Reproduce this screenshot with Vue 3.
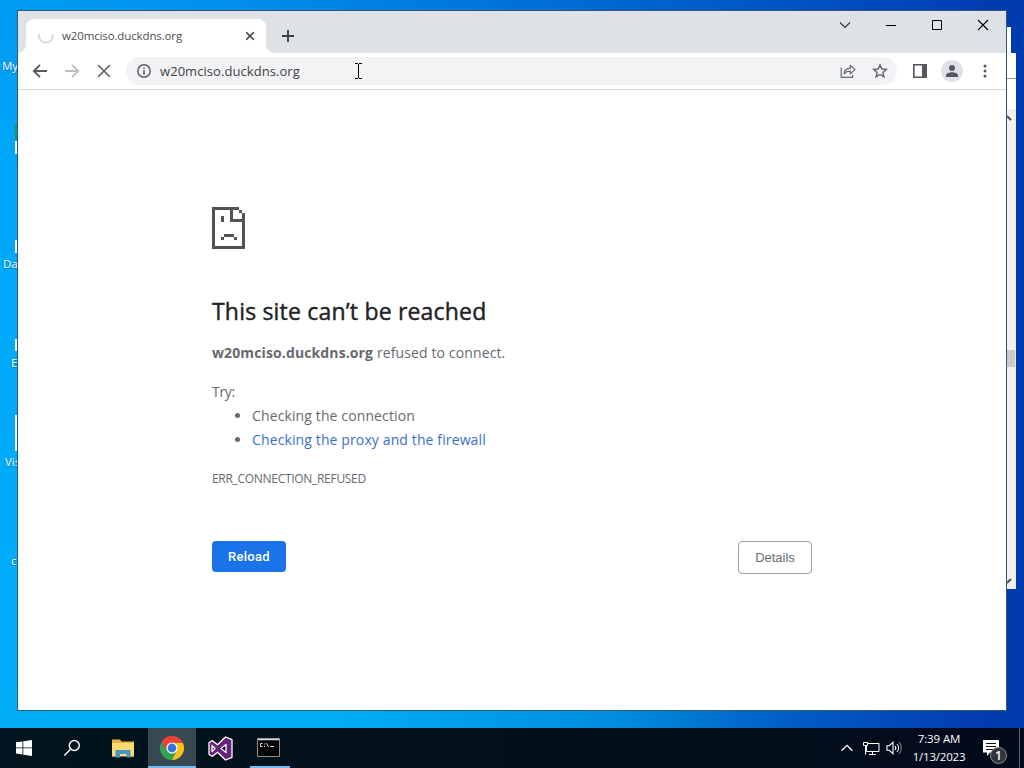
<template>
    <div class="desktop">
        <span v-for="item in shortcuts" :key="item.label" class="shortcut" :style="{ left: item.x + 'px', top: item.y + 'px' }">{{ item.label }}</span>
        <i v-for="edge in iconEdges" :key="edge.y" class="icon-edge" :style="{ top: edge.y + 'px', height: edge.h + 'px' }"></i>
        <i class="green-edge"></i>

        <div class="back-tab"></div>
        <div class="back-window">
            <div class="back-toolbar"></div>
            <div class="scrollbar">
                <svg width="9" height="12" viewBox="0 0 9 12"><path d="M0 3l4 4" stroke="#555" stroke-width="2" fill="none"/></svg>
                <div class="thumb"></div>
                <svg width="9" height="12" viewBox="0 0 9 12"><path d="M0 9l4-4" stroke="#555" stroke-width="2" fill="none"/></svg>
            </div>
        </div>

        <main class="browser">
            <header class="tabstrip">
                <div class="tab">
                    <svg class="spinner" width="18" height="18" viewBox="0 0 18 18"><path d="M2.2 6.5A7 7 0 1 0 15.8 7.5" fill="none" stroke="#d9dbdd" stroke-width="2"/></svg>
                    <span class="tab-title">w20mciso.duckdns.org</span>
                    <svg width="10" height="10" viewBox="0 0 10 10"><path d="M1.2 1.2l7.6 7.6M8.8 1.2L1.2 8.8" stroke="#3c4043" stroke-width="1.6"/></svg>
                </div>
                <svg class="new-tab" width="14" height="14" viewBox="0 0 14 14"><path d="M7 1v12M1 7h12" stroke="#3c4043" stroke-width="1.9"/></svg>
                <div class="window-controls">
                    <svg width="46" height="30" viewBox="0 0 46 30"><path d="M18 12.5l5 5 5-5" fill="none" stroke="#333" stroke-width="1.1"/></svg>
                    <svg width="46" height="30" viewBox="0 0 46 30"><path d="M18 15.5h10" stroke="#000"/></svg>
                    <svg width="46" height="30" viewBox="0 0 46 30"><path d="M18.5 10.5h9v9h-9z" fill="none" stroke="#000"/></svg>
                    <svg width="46" height="30" viewBox="0 0 46 30"><path d="M18 10l10 10M28 10L18 20" stroke="#000" stroke-width="1.1"/></svg>
                </div>
            </header>

            <nav class="toolbar">
                <svg class="nav-icon" width="16" height="16" viewBox="0 0 16 16"><path d="M15 8H2M8 1.8L1.8 8 8 14.2" fill="none" stroke="#54575b" stroke-width="1.8"/></svg>
                <svg class="nav-icon" width="16" height="16" viewBox="0 0 16 16"><path d="M1 8h13M8 1.8L14.2 8 8 14.2" fill="none" stroke="#bcbec1" stroke-width="1.8"/></svg>
                <svg class="nav-icon" width="16" height="16" viewBox="0 0 16 16"><path d="M2.2 2.2l11.6 11.6M13.8 2.2L2.2 13.8" stroke="#5a5d61" stroke-width="1.6"/></svg>
                <div class="omnibox">
                    <svg width="14" height="14" viewBox="0 0 14 14"><circle cx="7" cy="7" r="6.2" fill="none" stroke="#5f6368" stroke-width="1.5"/><path d="M7 6v4.5M7 3.4v1.6" stroke="#5f6368" stroke-width="1.6"/></svg>
                    <span class="url">w20mciso.duckdns.org</span>
                    <svg class="share" width="16" height="16" viewBox="0 0 16 16" fill="none" stroke="#6a6e72" stroke-width="1.2"><path d="M1.2 4.500v9.900h11.400V12"/><path d="M4 10.800c.5-3.600 2.500-5.400 6.300-5.600V2.300L15 6.600l-4.700 4.200V8.200C7.500 8.200 5.500 9 4 10.800z" stroke-linejoin="round"/></svg>
                    <svg width="16" height="16" viewBox="0 0 16 16"><path d="M8 1.900l1.800 4.100 4.500.4-3.400 3 1 4.400L8 11.500l-3.900 2.300 1-4.400-3.400-3 4.500-.4z" fill="none" stroke="#5f6368" stroke-width="1.4"/></svg>
                </div>
                <svg class="panel" width="14" height="14" viewBox="0 0 14 14"><path d="M.8.8h12.400v12.400H.8z" fill="none" stroke="#54575b" stroke-width="1.6"/><path d="M9 1h5v12H9z" fill="#54575b"/></svg>
                <svg class="avatar" width="22" height="22" viewBox="0 0 22 22"><circle cx="11" cy="11" r="11" fill="#dfe1e8"/><circle cx="11" cy="8" r="3" fill="#54575f"/><path d="M5 17v-1.500c0-2 3.500-3.200 6-3.200s6 1.200 6 3.200V17z" fill="#54575f"/></svg>
                <svg width="4" height="14" viewBox="0 0 4 14" fill="#54575b"><circle cx="2" cy="2" r="1.500"/><circle cx="2" cy="7" r="1.500"/><circle cx="2" cy="12" r="1.500"/></svg>
            </nav>

            <section class="page">
                <svg class="sad" width="33" height="42" viewBox="0 0 33 42" fill="#535353" shape-rendering="crispEdges">
                    <path d="M0 0h27v3H21v9h12v30H0zM3 3v36h27V15H18V3z" fill-rule="evenodd"/>
                    <path d="M27 3h3v3h-3zM30 6h3v9h-3zM9 9h3v6H9zM12 27h10v3H12zM9 30h3v3H9zM22 30h3v3h-3z"/>
                </svg>
                <h1>This site can’t be reached</h1>
                <p class="reason"><strong>w20mciso.duckdns.org</strong> <span>refused to connect.</span></p>
                <p class="try">Try:</p>
                <ul>
                    <li class="check">Checking the connection</li>
                    <li class="proxy"><a>Checking the proxy and the firewall</a></li>
                </ul>
                <p class="code">ERR_CONNECTION_REFUSED</p>
                <div class="buttons">
                    <button class="reload">Reload</button>
                    <button class="details">Details</button>
                </div>
            </section>
        </main>

        <svg class="cursor" width="9" height="17" viewBox="0 0 9 17" shape-rendering="crispEdges"><path d="M1 1.5h3M5 1.5h3M4.500 2v14M1 16.500h3M5 16.500h3" stroke="#000" fill="none"/></svg>

        <footer class="taskbar">
            <div class="task start">
                <svg width="16" height="16" viewBox="0 0 16 16" fill="#fff"><path d="M0 2.300l6.500-.9v6.100H0zM7.300 1.300L16 0v7.500H7.300zM0 8.300h6.500v6.200L0 13.600zM7.300 8.300H16V16l-8.700-1.300z"/></svg>
            </div>
            <div class="task">
                <svg width="18" height="18" viewBox="0 0 18 18" fill="none" stroke="#fff" stroke-width="1.400"><circle cx="11.300" cy="6.500" r="5"/><path d="M7.600 10.200L1.300 16.500"/></svg>
            </div>
            <div class="task files">
                <svg width="22" height="19" viewBox="0 0 22 19"><path d="M0 .5h8l1.500 2H22V17H0z" fill="#e9b33f"/><path d="M0 4h22v13.500H0z" fill="#fcdc72"/><path d="M3.500 18.500V11h15v7.500h-4V15H8v3.500z" fill="#4594c6"/><path d="M0 17h3.500M18.500 17H22" stroke="#eebd4a"/></svg>
            </div>
            <div class="task active">
                <svg width="24" height="24" viewBox="0 0 24 24"><path d="M12 6.500h10.700A12 12 0 0 1 12 24l-1-5z" fill="#fbc116"/><path d="M1.600 6L7.300 15l4.700 2.500L16.800 15 12 24A12 12 0 0 1 1.600 6z" fill="#34a353"/><path d="M1.600 6A12 12 0 0 1 22.700 6.500H12L7 15z" fill="#e94335"/><circle cx="12" cy="12" r="5.600" fill="#fff"/><circle cx="12" cy="12" r="4.400" fill="#3474e0"/></svg>
            </div>
            <div class="task">
                <svg width="25" height="25" viewBox="0 0 25 25"><path d="M17.500 1l6.500 2.700v17.600L17.500 24l-8-7.700-5 4L1 18.500v-12l3.500-1.800 5 4zM18 8.500l-5 4 5 4zM4 9.500v6l3-3z" fill="#68217a" stroke="#fff" stroke-width="1.300" fill-rule="evenodd" stroke-linejoin="round"/></svg>
            </div>
            <div class="task console">
                <svg width="23" height="19" viewBox="0 0 23 19"><path d="M.5.500h22v18H.5z" fill="#050505" stroke="#8b9094"/><path d="M1 1.500h21" stroke="#d7dadd" stroke-width="1.500"/><path d="M5.500 5.500H3.500v3h2M7.500 5.500v1M7.500 8v1M9.500 5l2 4M13 8.500h4" fill="none" stroke="#ddd"/></svg>
            </div>
            <div class="tray">
                <svg width="12" height="8" viewBox="0 0 12 8"><path d="M.6 6.800L6 1.400l5.400 5.400" fill="none" stroke="#fff" stroke-width="1.300"/></svg>
                <svg width="17" height="15" viewBox="0 0 17 15" fill="none" stroke="#fff"><path d="M5 2.500h11v8H3.500V5M9.500 10.500v3M6 13.500h7M.5 1.500h4v3h-4zM2.500 5v8.500"/></svg>
                <svg width="17" height="14" viewBox="0 0 17 14" fill="none" stroke="#fff" stroke-width="1.100"><path d="M1 4.700h2.300L7 1.300v11.400L3.300 9.300H1zM9 5a3 3 0 0 1 0 4M11 3a6 6 0 0 1 0 8"/><path d="M13.200 1.200a9 9 0 0 1 0 11.600" stroke="#777e88"/></svg>
            </div>
            <div class="clock"><span>7:39 AM</span><span class="date">1/13/2023</span></div>
            <div class="notice">
                <svg width="16" height="17" viewBox="0 0 16 17"><path d="M0 0h16v12.500H7L4 16v-3.500H0z" fill="#fff"/><path d="M3 3.500h10M3 6.500h10M3 9.500h7" stroke="#08101c"/></svg>
                <b>1</b>
            </div>
            <i class="show-desktop"></i>
        </footer>
    </div>
</template>

<script setup>
    const shortcuts = [
        { label: 'My', x: 2, y: 58 },
        { label: 'Da', x: 3, y: 256 },
        { label: 'E', x: 11, y: 355 },
        { label: 'Vis', x: 5, y: 454 },
        { label: 'c', x: 11, y: 553 },
    ]

    const iconEdges = [
        { y: 141, h: 13 },
        { y: 240, h: 13 },
        { y: 339, h: 12 },
        { y: 415, h: 36 },
    ]
</script>

<style>
    body {
        margin: 0;
        overflow: hidden;
    }
</style>

<style scoped>
    .desktop {
        position: relative;
        width: 1024px;
        height: 768px;
        overflow: hidden;
        box-sizing: border-box;
        padding: 10px 17px 0;
        display: flex;
        flex-direction: column;
        font-family: "Open Sans", "Noto Sans", sans-serif;
        background:
            linear-gradient(90deg, transparent 970px, #003bb0 1010px),
            linear-gradient(90deg, #009df3 0, #0090ea 230px, #0074d8 500px, #0052c2 800px, #003bb0 1010px) 0 0 / 100% 300px no-repeat,
            linear-gradient(90deg, #00adf6 0, #00aff4 330px, #008cde 620px, #0060c6 780px, #043bb0 980px);
    }

    .desktop::before {
        content: "";
        position: absolute;
        left: 0;
        top: 0;
        width: 17px;
        height: 728px;
        background: linear-gradient(#0099f0, #00a6fa 150px, #00aff8);
    }

    .shortcut {
        position: absolute;
        font-size: 11.5px;
        line-height: 16px;
        color: #fff;
        text-shadow: 0 1px 1px rgba(0, 40, 90, 0.4);
    }

    .icon-edge {
        position: absolute;
        left: 15px;
        width: 2px;
        background: #e8f5fc;
    }

    .green-edge {
        position: absolute;
        left: 14px;
        top: 124px;
        width: 3px;
        height: 16px;
        background: linear-gradient(90deg, #049fc9, #18976f);
    }

    .back-tab {
        position: absolute;
        left: 1000px;
        top: 27px;
        width: 11px;
        height: 26px;
        background: #fff;
    }

    .back-window {
        position: absolute;
        left: 1000px;
        top: 53px;
        width: 16px;
        height: 536px;
        background: #fff;
        display: flex;
        flex-direction: column;
    }

    .back-toolbar {
        height: 25px;
        border-bottom: 1px solid #8f9699;
        margin-bottom: 30px;
    }

    .scrollbar {
        flex: 1;
        background: #f0f0f0;
        padding: 4px 0 3px 7px;
        display: flex;
        flex-direction: column;
    }

    .thumb {
        width: 8px;
        height: 17px;
        margin: 225px 0 auto;
        background: #c9c9c9;
    }

    .browser {
        position: relative;
        box-sizing: border-box;
        width: 990px;
        height: 701px;
        border: 1px solid #34566f;
        background: #fff;
        display: flex;
        flex-direction: column;
    }

    .tabstrip {
        height: 42px;
        background: #dee1e6;
        display: flex;
        align-items: flex-end;
        flex: none;
    }

    .tab {
        position: relative;
        box-sizing: border-box;
        width: 240px;
        height: 34px;
        margin-left: 8px;
        padding: 0 11px;
        border-radius: 8px 8px 0 0;
        background: #fff;
        display: flex;
        align-items: center;
    }

    .tab::before,
    .tab::after {
        content: "";
        position: absolute;
        bottom: 0;
        width: 8px;
        height: 8px;
    }

    .tab::before {
        left: -8px;
        background: radial-gradient(circle at 0 0, transparent 7.5px, #fff 8px);
    }

    .tab::after {
        right: -8px;
        background: radial-gradient(circle at 100% 0, transparent 7.5px, #fff 8px);
    }

    .tab-title {
        flex: 1;
        margin-left: 7px;
        padding-bottom: 2px;
        font-size: 11.5px;
        letter-spacing: -0.13px;
        color: #4b4f53;
    }

    .new-tab {
        margin: 0 0 10px 15px;
    }

    .window-controls {
        margin-left: auto;
        align-self: flex-start;
        display: flex;
        margin-top: -1px;
    }

    .toolbar {
        box-sizing: border-box;
        height: 37px;
        padding: 0 19px 0 14px;
        border-bottom: 1px solid #d5d6d8;
        display: flex;
        align-items: center;
        flex: none;
    }

    .nav-icon {
        margin-right: 16px;
    }

    .omnibox {
        box-sizing: border-box;
        width: 771px;
        height: 28px;
        margin-left: -2px;
        padding: 0 9px 0 11px;
        border-radius: 14px;
        background: #f1f3f4;
        display: flex;
        align-items: center;
    }

    .url {
        margin-left: 9px;
        font-size: 13px;
        letter-spacing: 0.06px;
        color: #3f4246;
    }

    .share {
        margin-left: auto;
        margin-right: 16px;
    }

    .panel {
        margin-left: 16px;
    }

    .avatar {
        margin: 0 20px 0 14px;
    }

    .page {
        width: 600px;
        margin-left: 194px;
        padding-top: 117px;
        font-size: 14px;
        line-height: 24px;
        letter-spacing: 0.12px;
        color: #666a6e;
    }

    .sad {
        display: block;
    }

    h1 {
        margin: 48px 0 0;
        font-size: 23px;
        line-height: 29px;
        letter-spacing: 0.19px;
        font-weight: 500;
        -webkit-text-stroke: 0.4px #202124;
        color: #202124;
    }

    p {
        margin: 0;
        white-space: nowrap;
    }

    .reason {
        margin-top: 15px;
    }

    .try {
        margin-top: 15px;
        letter-spacing: -0.3px;
    }

    ul {
        margin: 0;
        padding-left: 40px;
    }

    a {
        color: #3a70cf;
    }

    .code {
        margin-top: 15px;
        font-size: 12px;
        letter-spacing: -0.3px;
    }

    .buttons {
        margin-top: 50px;
        display: flex;
        justify-content: space-between;
        align-items: flex-start;
    }

    button {
        box-sizing: border-box;
        width: 74px;
        height: 31px;
        padding: 0;
        border: none;
        border-radius: 4px;
        font-size: 13px;
        white-space: nowrap;
    }

    .reload {
        background: #1a73e8;
        color: #fff;
        font-family: Roboto, sans-serif;
        font-weight: 500;
        letter-spacing: 0.3px;
    }

    .details {
        height: 33px;
        border: 1px solid #9aa0a6;
        background: #fff;
        color: #696d72;
        font-family: "Liberation Sans", sans-serif;
    }

    .cursor {
        position: absolute;
        left: 354px;
        top: 62px;
    }

    .taskbar {
        margin: 17px -17px 0;
        height: 40px;
        background: linear-gradient(90deg, #02141f, #031019 50%, #020b1c);
        display: flex;
        color: #fff;
    }

    .task {
        box-sizing: border-box;
        width: 48px;
        height: 40px;
        display: flex;
        align-items: center;
        justify-content: center;
    }

    .files {
        padding-left: 1px;
        width: 52px;
    }

    .active {
        background: #384850;
        border-bottom: 2px solid #76b9ed;
        padding-top: 2px;
    }

    .console {
        width: 40px;
        margin-left: 6px;
        padding-right: 3px;
        border-bottom: 2px solid #76b9ed;
    }

    .tray {
        margin-left: auto;
        display: flex;
        align-items: center;
        gap: 10px;
        margin-right: 7px;
    }

    .tray svg:last-child {
        margin-left: -4px;
    }

    .clock {
        width: 58px;
        padding-top: 2px;
        display: flex;
        flex-direction: column;
        align-items: center;
        font-size: 11.5px;
        line-height: 18px;
        letter-spacing: -0.1px;
        white-space: nowrap;
    }

    .date {
        letter-spacing: -0.2px;
    }

    .notice {
        position: relative;
        margin: 12px 0 0 15px;
        width: 36px;
    }

    .notice b {
        position: absolute;
        left: 7px;
        top: 7px;
        box-sizing: border-box;
        width: 17px;
        height: 17px;
        border: 1px solid #888d94;
        border-radius: 50%;
        background: #30343b;
        font-size: 12px;
        font-weight: 600;
        line-height: 15px;
        text-align: center;
    }

    .show-desktop {
        width: 4px;
        border-left: 1px solid #59626d;
    }
</style>
